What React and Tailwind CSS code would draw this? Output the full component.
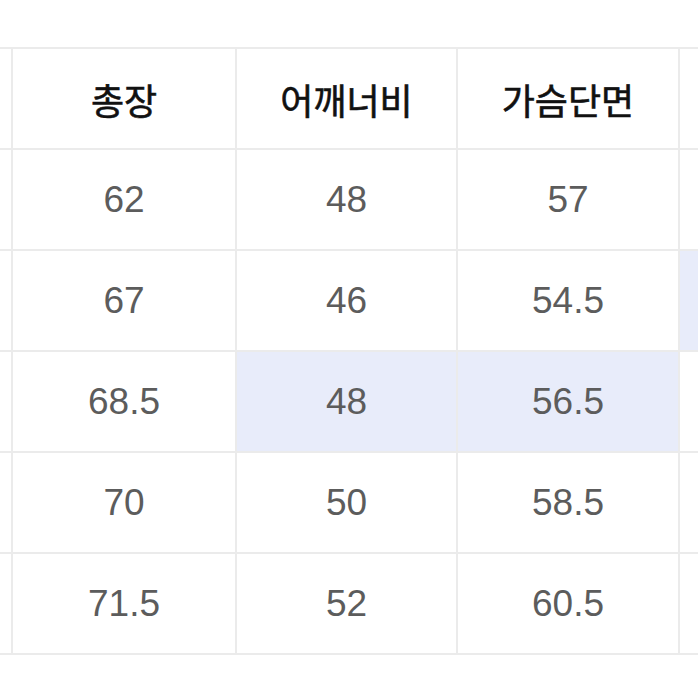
const HEAD = ['총장', '어깨너비', '가슴단면']

const ROWS = [
  { cells: ['62', '48', '57'], blue: [], edge: false },
  { cells: ['67', '46', '54.5'], blue: [], edge: true },
  { cells: ['68.5', '48', '56.5'], blue: [1, 2], edge: false },
  { cells: ['70', '50', '58.5'], blue: [], edge: false },
  { cells: ['71.5', '52', '60.5'], blue: [], edge: false },
]

export default function App() {
  return (
    <div className="w-[698px] h-[698px] bg-white overflow-hidden pt-[47px]">
      <div className="grid grid-cols-[11px_222px_219px_220px_1fr] grid-rows-[99px_repeat(5,99px)] gap-[2px] bg-[#ebebeb] border-y-2 border-[#ebebeb]">
        {/* header */}
        <div className="bg-white" />
        {HEAD.map(h => (
          <div
            key={h}
            className="bg-white flex items-center justify-center text-[36px] font-normal text-[#111] [-webkit-text-stroke:0.6px_#111]"
            style={{ fontFamily: '"Noto Sans CJK KR", "Noto Sans", sans-serif' }}
          >
            {h}
          </div>
        ))}
        <div className="bg-white" />

        {/* rows */}
        {ROWS.map((r, i) => (
          <div key={i} className="contents">
            <div className="bg-white" />
            {r.cells.map((c, j) => (
              <div
                key={j}
                className={`flex items-center justify-center text-[37px] text-[#5c5c5c] ${r.blue.includes(j) ? 'bg-[#e8ecfa]' : 'bg-white'}`}
                style={{ fontFamily: '"Liberation Sans", Arial, sans-serif' }}
              >
                {c}
              </div>
            ))}
            <div className={r.edge ? 'bg-[#e8ecfa]' : 'bg-white'} />
          </div>
        ))}
      </div>
    </div>
  )
}
